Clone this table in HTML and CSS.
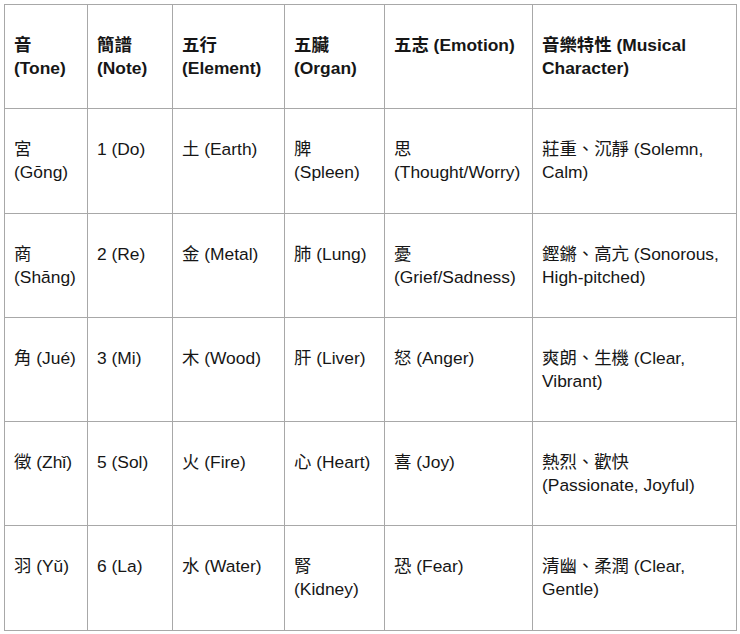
FILE: index.html
```html
<!DOCTYPE html>
<html lang="zh-Hant">
<head>
<meta charset="utf-8">
<link rel="stylesheet" href="styles.css">
</head>
<body>
<table class="tone-table">
  <colgroup>
    <col class="c1"><col class="c2"><col class="c3"><col class="c4"><col class="c5"><col class="c6">
  </colgroup>
  <thead>
    <tr>
      <th>音<br>(Tone)</th>
      <th>簡譜<br>(Note)</th>
      <th>五行<br>(Element)</th>
      <th>五臟<br>(Organ)</th>
      <th>五志 (Emotion)</th>
      <th>音樂特性 (Musical Character)</th>
    </tr>
  </thead>
  <tbody>
    <tr>
      <td>宮<br>(Gōng)</td>
      <td>1 (Do)</td>
      <td>土 (Earth)</td>
      <td>脾<br>(Spleen)</td>
      <td>思<br>(Thought/Worry)</td>
      <td>莊重、沉靜 (Solemn, Calm)</td>
    </tr>
    <tr>
      <td>商<br>(Shāng)</td>
      <td>2 (Re)</td>
      <td>金 (Metal)</td>
      <td>肺 (Lung)</td>
      <td>憂<br>(Grief/Sadness)</td>
      <td>鏗鏘、高亢 (Sonorous, High-pitched)</td>
    </tr>
    <tr>
      <td>角 (Jué)</td>
      <td>3 (Mi)</td>
      <td>木 (Wood)</td>
      <td>肝 (Liver)</td>
      <td>怒 (Anger)</td>
      <td>爽朗、生機 (Clear, Vibrant)</td>
    </tr>
    <tr>
      <td>徵 (Zhǐ)</td>
      <td>5 (Sol)</td>
      <td>火 (Fire)</td>
      <td>心 (Heart)</td>
      <td>喜 (Joy)</td>
      <td>熱烈、歡快<br>(Passionate, Joyful)</td>
    </tr>
    <tr>
      <td>羽 (Yǔ)</td>
      <td>6 (La)</td>
      <td>水 (Water)</td>
      <td>腎<br>(Kidney)</td>
      <td>恐 (Fear)</td>
      <td>清幽、柔潤 (Clear, Gentle)</td>
    </tr>
  </tbody>
</table>
</body>
</html>
```

FILE: styles.css
```css
html, body {
  margin: 0;
  padding: 0;
  background: #ffffff;
}

body {
  padding: 4px 0 0 4px;
  font-family: "Liberation Sans", Arial, "Noto Sans CJK TC", sans-serif;
  font-size: 17.4px;
  line-height: 23px;
  color: #161616;
}

.tone-table {
  border-collapse: collapse;
  table-layout: fixed;
  width: 732px;
}

.c1 { width: 83px; }
.c2 { width: 85px; }
.c3 { width: 112px; }
.c4 { width: 100px; }
.c5 { width: 148px; }
.c6 { width: 204px; }

.tone-table th,
.tone-table td {
  border: 1px solid #a8a8a8;
  padding: 29px 8px 28.25px 9px;
  vertical-align: top;
  text-align: left;
  height: 46px;
}

.tone-table th {
  font-weight: bold;
}
```
